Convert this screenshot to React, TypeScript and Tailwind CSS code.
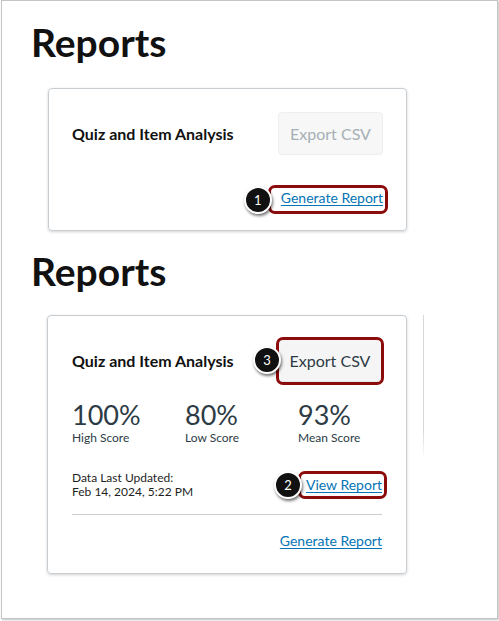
import type { ReactNode } from 'react';

// Numbered callout circle used over the screenshot
function Badge({ n, className }: { n: number; className: string }) {
  return (
    <span
      className={`absolute z-20 flex h-[28px] w-[28px] items-center justify-center rounded-full border-2 border-white bg-[#111111] text-[13px] leading-none text-white shadow-[1px_2px_3px_rgba(0,0,0,0.55)] ${className}`}
    >
      {n}
    </span>
  );
}

// Dark red highlight box drawn around a control
function Highlight({ children, box, badge }: { children: ReactNode; box: string; badge: ReactNode }) {
  return (
    <span className="relative inline-flex">
      <span className={`pointer-events-none absolute z-10 rounded-[7px] border-[3px] border-[#8c0b0b] ${box}`} />
      {badge}
      {children}
    </span>
  );
}

function Link({ children }: { children: ReactNode }) {
  return (
    <a href="#" className="relative z-10 text-[14px] leading-[20px] text-[#0374b5] underline underline-offset-[2px]">
      {children}
    </a>
  );
}

const stats = [
  { value: '100%', label: 'High Score' },
  { value: '80%', label: 'Low Score' },
  { value: '93%', label: 'Mean Score' },
];

export default function App() {
  return (
    <div className="h-[621px] w-[499px] overflow-hidden bg-white font-['Lato',sans-serif]">
      <div className="ml-[1px] h-[619px] w-[497px] border border-[#c4c4c4] pl-[29px] pt-[22px] shadow-[1px_1px_2px_rgba(0,0,0,0.25)]">
        {/* first state */}
        <h1 className="text-[39px] font-bold leading-[39px] text-[#111111]">Reports</h1>

        <div className="ml-[17px] mt-[26px] h-[143px] w-[359px] rounded-[4px] border border-[#c7cdd1] px-[23px] pt-[23px] shadow-[0_1px_3px_rgba(0,0,0,0.18)]">
          <div className="flex items-center justify-between">
            <span className="text-[16px] font-bold text-[#111111]">Quiz and Item Analysis</span>
            <button className="flex h-[43px] w-[105px] items-center justify-center rounded-[4px] border border-[#eceeef] bg-[#f7f7f7] text-[16px] text-[#a5afb5]">
              Export CSV
            </button>
          </div>
          <div className="mt-[33px] flex justify-end">
            <Highlight box="-left-[13px] -right-[5px] -top-[3px] -bottom-[6px]" badge={<Badge n={1} className="-left-[37px] -top-[2px]" />}>
              <Link>Generate Report</Link>
            </Highlight>
          </div>
        </div>

        {/* second state */}
        <h1 className="mt-[21px] text-[39px] font-bold leading-[39px] text-[#111111]">Reports</h1>

        <div className="mt-[24px] flex items-start">
          <div className="ml-[16px] h-[259px] w-[360px] rounded-[4px] border border-[#c7cdd1] px-[24px] pt-[23px] shadow-[0_1px_3px_rgba(0,0,0,0.18)]">
            <div className="flex items-center justify-between">
              <span className="text-[16px] font-bold text-[#111111]">Quiz and Item Analysis</span>
              <Highlight box="-left-[2px] -right-[2px] -top-[2px] -bottom-[3px]" badge={<Badge n={3} className="-left-[25px] top-[7px]" />}>
                <button className="flex h-[43px] w-[104px] items-center justify-center rounded-[4px] border border-[#e3e6e8] bg-[#f5f5f5] text-[16px] text-[#2d3b45]">
                  Export CSV
                </button>
              </Highlight>
            </div>

            <div className="mt-[18px] flex">
              {stats.map((s) => (
                <div key={s.label} className="w-[113px] shrink-0 last:w-auto">
                  <div className="text-[27px] leading-[30px] text-[#2d3b45]">{s.value}</div>
                  <div className="mt-px text-[12px] leading-[14px] text-[#2d3b45]">{s.label}</div>
                </div>
              ))}
            </div>

            <div className="mt-[26px] flex items-center justify-between">
              <div className="text-[12px] leading-[14px] text-[#1e1e1e]">
                <div>Data Last Updated:</div>
                <div>Feb 14, 2024, 5:22 PM</div>
              </div>
              <Highlight box="-left-[8px] -right-[5px] -top-[4px] -bottom-[4px]" badge={<Badge n={2} className="-left-[32px] -top-[4px]" />}>
                <Link>View Report</Link>
              </Highlight>
            </div>

            <div className="mt-[15px] h-px bg-[#c7cdd1]" />

            <div className="mt-[16px] flex justify-end">
              <Link>Generate Report</Link>
            </div>
          </div>
          {/* edge of the next card, cut off */}
          <div className="ml-[16px] h-[144px] w-px bg-gradient-to-b from-[#d5d9dc] from-80% to-transparent" />
        </div>
      </div>
    </div>
  );
}
